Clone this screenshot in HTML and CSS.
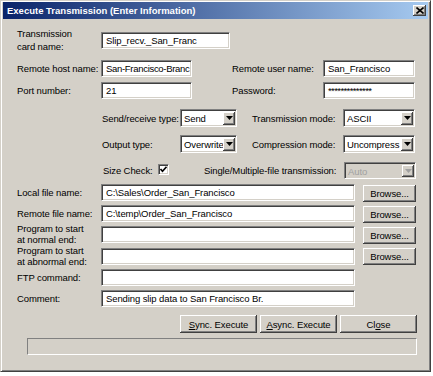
FILE: index.html
```html
<!DOCTYPE html>
<html>
<head>
<meta charset="utf-8">
<title>Execute Transmission (Enter Information)</title>
<link rel="stylesheet" href="styles.css">
</head>
<body>
<div class="window">
  <div class="titlebar">
    <span class="title">Execute Transmission (Enter Information)</span>
    <span class="close-btn"><svg width="8" height="7" viewBox="0 0 8 7"><path d="M0.5 0.5 L7.5 6.5 M7.5 0.5 L0.5 6.5" stroke="#000" stroke-width="1.6" fill="none"/></svg></span>
  </div>
  <div class="form">
    <div class="row row-card">
      <div class="lbl lbl-main lbl-card">Transmission<br>card name:</div>
      <div class="field f-card">Slip_recv._San_Franc</div>
    </div>
    <div class="row r-host">
      <div class="col-left">
        <div class="lbl lbl-main">Remote host name:</div>
        <div class="field f-host">San-Francisco-Branc</div>
      </div>
      <div class="lbl lbl-right">Remote user name:</div>
      <div class="field f-user">San_Francisco</div>
    </div>
    <div class="row r-port">
      <div class="col-left">
        <div class="lbl lbl-main">Port number:</div>
        <div class="field f-port">21</div>
      </div>
      <div class="lbl lbl-right">Password:</div>
      <div class="field f-user pw">**************</div>
    </div>
    <div class="row row-sel r-send">
      <div class="col-mid">
        <div class="lbl lbl-mid">Send/receive type:</div>
        <div class="select s-small"><span class="sel-text">Send</span><span class="dd"><svg width="7" height="4" viewBox="0 0 7 4"><path d="M0 0 H7 L3.5 4 Z" fill="#000"/></svg></span></div>
      </div>
      <div class="lbl lbl-right">Transmission mode:</div>
      <div class="select s-wide"><span class="sel-text">ASCII</span><span class="dd"><svg width="7" height="4" viewBox="0 0 7 4"><path d="M0 0 H7 L3.5 4 Z" fill="#000"/></svg></span></div>
    </div>
    <div class="row row-sel r-out">
      <div class="col-mid">
        <div class="lbl lbl-mid">Output type:</div>
        <div class="select s-small"><span class="sel-text">Overwrite</span><span class="dd"><svg width="7" height="4" viewBox="0 0 7 4"><path d="M0 0 H7 L3.5 4 Z" fill="#000"/></svg></span></div>
      </div>
      <div class="lbl lbl-right">Compression mode:</div>
      <div class="select s-wide"><span class="sel-text">Uncompress</span><span class="dd"><svg width="7" height="4" viewBox="0 0 7 4"><path d="M0 0 H7 L3.5 4 Z" fill="#000"/></svg></span></div>
    </div>
    <div class="row r-size">
      <div class="lbl lbl-size">Size Check:</div>
      <div class="check"><svg width="9" height="9" viewBox="0 0 9 9"><path d="M1.5 4 L3.5 6.2 L7.5 1.8" stroke="#000" stroke-width="1.7" fill="none"/></svg></div>
      <div class="lbl lbl-single">Single/Multiple-file transmission:</div>
      <div class="select s-wide disabled"><span class="sel-text">Auto</span><span class="dd"><svg width="7" height="4" viewBox="0 0 7 4"><path d="M0 0 H7 L3.5 4 Z" fill="#a0a0a0"/></svg></span></div>
    </div>
    <div class="row row-path r-local">
      <div class="lbl lbl-main">Local file name:</div>
      <div class="field f-path">C:\Sales\Order_San_Francisco</div>
      <div class="btn btn-browse">Browse...</div>
    </div>
    <div class="row row-path r-remote">
      <div class="lbl lbl-main">Remote file name:</div>
      <div class="field f-path">C:\temp\Order_San_Francisco</div>
      <div class="btn btn-browse">Browse...</div>
    </div>
    <div class="row row-path r-normal">
      <div class="lbl lbl-main lbl-2">Program to start<br>at normal end:</div>
      <div class="field f-path"></div>
      <div class="btn btn-browse">Browse...</div>
    </div>
    <div class="row row-path r-abnormal">
      <div class="lbl lbl-main lbl-2">Program to start<br>at abnormal end:</div>
      <div class="field f-path"></div>
      <div class="btn btn-browse flush">Browse...</div>
    </div>
    <div class="row r-ftp">
      <div class="lbl lbl-main">FTP command:</div>
      <div class="field f-path"></div>
    </div>
    <div class="row r-comment">
      <div class="lbl lbl-main">Comment:</div>
      <div class="field f-path">Sending slip data to San Francisco Br.</div>
    </div>
    <div class="row btn-row">
      <div class="btn btn-action"><span><u>S</u>ync. Execute</span></div>
      <div class="btn btn-action btn-async"><span><u>A</u>sync. Execute</span></div>
      <div class="btn btn-action"><span>Cl<u>o</u>se</span></div>
    </div>
    <div class="status"></div>
  </div>
</div>
</body>
</html>
```

FILE: styles.css
```css
* { box-sizing: border-box; }

body {
  margin: 0;
  background: #ffffff;
  font-family: "Liberation Sans", Arial, sans-serif;
  font-size: 9.5px;
  letter-spacing: -0.1px;
  color: #000;
}

.window {
  width: 431px;
  height: 372px;
  background: #d4d0c8;
  border: 1px solid;
  border-color: #d4d0c8 #404040 #404040 #d4d0c8;
  box-shadow: inset 1px 1px #ffffff, inset -1px -1px #808080;
  padding: 1px 2px 2px 2px;
}

.titlebar {
  height: 17px;
  display: flex;
  align-items: center;
  padding-left: 4px;
  background: linear-gradient(to right, #0a246a, #a6caf0);
  color: #fff;
  font-weight: bold;
  letter-spacing: 0;
}

.close-btn {
  margin-left: auto;
  margin-right: 2px;
  width: 13px;
  height: 11px;
  background: #d4d0c8;
  box-shadow: inset -1px -1px #404040, inset 1px 1px #ffffff, inset -2px -2px #808080;
  display: flex;
  align-items: center;
  justify-content: center;
}

.form {
  display: flex;
  flex-direction: column;
  padding-left: 14px;
}

.row {
  display: flex;
  align-items: center;
  height: 17px;
  flex: none;
}

.lbl {
  flex: none;
  white-space: nowrap;
}

.lbl-main { width: 84px; }
.lbl-right { width: 91px; }
.lbl-mid { width: 78px; }
.lbl-size { width: 55px; }
.lbl-single { width: 140px; margin-left: 35px; }

.lbl-card {
  align-self: flex-start;
  line-height: 13px;
}

.lbl-2 {
  align-self: flex-start;
  line-height: 11px;
  margin-top: -3px;
}

.col-left {
  display: flex;
  align-items: center;
  width: 215px;
  flex: none;
}

.col-mid {
  display: flex;
  align-items: center;
  width: 150px;
  flex: none;
}

/* sunken text field */
.field {
  flex: none;
  height: 17px;
  background: #fff;
  border: 1px solid;
  border-color: #808080 #ffffff #ffffff #808080;
  box-shadow: inset 1px 1px #404040, inset -1px -1px #d4d0c8;
  padding: 0 2px 0 4px;
  line-height: 15px;
  white-space: nowrap;
  overflow: hidden;
}

.f-card { width: 129px; margin-top: 5px; }
.f-host { width: 91px; letter-spacing: -0.3px; }
.f-port { width: 91px; }
.f-user { width: 92px; }
.f-path { width: 254px; }
.pw { letter-spacing: -0.6px; }

/* rows */
.row-card { height: 31px; margin-top: 8px; align-items: flex-start; }
.r-host { margin-top: 2px; }
.r-port { margin-top: 5px; }
.row-sel { height: 18px; }
.r-send { margin-top: 10px; padding-left: 85px; }
.r-out { margin-top: 8px; padding-left: 85px; }
.r-size { margin-top: 9px; padding-left: 86px; }
.row-path { height: 18px; align-items: flex-start; }
.row-path .lbl:not(.lbl-2) { line-height: 18px; }
.r-local { margin-top: 5px; }
.r-remote { margin-top: 3px; }
.r-normal { margin-top: 3px; }
.r-abnormal { margin-top: 4px; }
.r-ftp { margin-top: 3px; }
.r-comment { margin-top: 4px; }

/* drop-down */
.select {
  flex: none;
  display: flex;
  height: 18px;
  background: #fff;
  border: 1px solid;
  border-color: #808080 #ffffff #ffffff #808080;
  box-shadow: inset 1px 1px #404040, inset -1px -1px #d4d0c8;
  padding: 2px 1px 1px 2px;
}

.r-size .select { height: 17px; }

.s-small { width: 57px; }
.s-wide { width: 72px; }

.sel-text {
  flex: 1;
  min-width: 0;
  overflow: hidden;
  white-space: nowrap;
  padding-left: 1px;
  line-height: 13px;
}

.dd {
  flex: none;
  width: 12px;
  background: #d4d0c8;
  box-shadow: inset -1px -1px #404040, inset 1px 1px #ffffff, inset -2px -2px #808080;
  display: flex;
  align-items: center;
  justify-content: center;
  padding-bottom: 1px;
}

.select.disabled { background: #d4d0c8; }
.select.disabled .sel-text { color: #a0a0a0; }

/* checkbox */
.check {
  flex: none;
  width: 11px;
  height: 11px;
  margin-top: -2px;
  background: #fff;
  border: 1px solid;
  border-color: #808080 #ffffff #ffffff #808080;
  box-shadow: inset 1px 1px #404040, inset -1px -1px #d4d0c8;
  display: flex;
  align-items: center;
  justify-content: center;
}

/* buttons */
.btn {
  flex: none;
  display: flex;
  align-items: center;
  justify-content: center;
  background: #d4d0c8;
  box-shadow: inset -1px -1px #404040, inset 1px 1px #ffffff, inset -2px -2px #808080;
  white-space: nowrap;
}

.btn-browse {
  width: 53px;
  height: 17px;
  margin-left: 8px;
  margin-top: 1px;
}

.btn-browse.flush { margin-top: 0; }

.btn-row {
  height: 18px;
  margin-top: 8px;
  padding-left: 163px;
  gap: 3px;
}

.btn-action {
  width: 77px;
  height: 18px;
}

.btn-async { width: 77px; }

.status {
  flex: none;
  width: 390px;
  height: 17px;
  margin-top: 5px;
  margin-left: 10px;
  border: 1px solid;
  border-color: #808080 #ffffff #ffffff #808080;
}
```
